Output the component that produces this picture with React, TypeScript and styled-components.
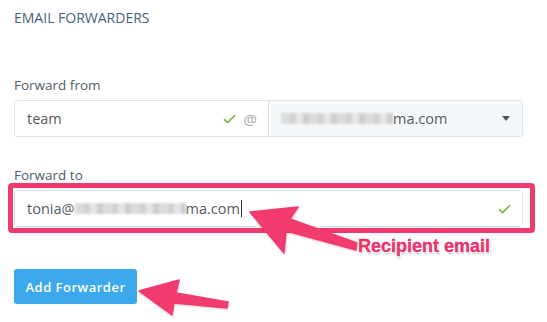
import styled, { createGlobalStyle } from "styled-components";

const GlobalStyle = createGlobalStyle`
  html, body {
    margin: 0;
    padding: 0;
    background: #ffffff;
  }
  body {
    font-family: "Open Sans", "Liberation Sans", sans-serif;
  }
`;

const Stage = styled.div`
  position: relative;
  width: 547px;
  height: 322px;
  overflow: hidden;
`;

const Form = styled.div`
  padding: 9px 24px 0 14px;
  display: flex;
  flex-direction: column;
`;

const Title = styled.h2`
  margin: 0;
  font-size: 14px;
  line-height: 18px;
  font-weight: 400;
  color: #46607a;
  text-transform: uppercase;
`;

const Label = styled.label<{ $top: number }>`
  margin-top: ${p => p.$top}px;
  margin-bottom: 6px;
  font-size: 13.5px;
  line-height: 18px;
  color: #4f5d68;
`;

const Row = styled.div`
  display: flex;
  height: 37px;
  border: 1px solid #dde3e7;
  border-radius: 3px;
  box-sizing: border-box;
`;

const Field = styled.div<{ $grey?: boolean }>`
  flex: 1;
  display: flex;
  align-items: center;
  padding: 0 11px 0 12px;
  background: ${p => (p.$grey ? "#f5f8fa" : "#ffffff")};
  font-size: 14.5px;
  color: #555c62;
  & + & {
    border-left: 1px solid #dde3e7;
  }
`;

const Value = styled.span`
  flex: 1;
  display: flex;
  align-items: center;
  white-space: nowrap;
`;

const Blur = styled.span<{ $w: number }>`
  display: inline-block;
  width: ${p => p.$w}px;
  height: 11px;
  background: repeating-linear-gradient(
    90deg,
    #dcdcdc 0 9px,
    #d2d2d2 9px 15px,
    #e6e6e6 15px 22px,
    #cdcdcd 22px 28px
  );
  filter: blur(0.8px);
`;

const Caret = styled.span`
  display: inline-block;
  width: 1px;
  height: 17px;
  background: #333;
  margin-left: 1px;
`;

const At = styled.span`
  font-size: 15px;
  color: #a3a8ad;
  margin-left: 8px;
`;

const DropArrow = styled.span`
  width: 0;
  height: 0;
  border-left: 4.5px solid transparent;
  border-right: 4.5px solid transparent;
  border-top: 5px solid #4d5358;
  margin-right: 1px;
`;

const Highlight = styled.div`
  position: relative;
`;

const HighlightRing = styled.div`
  position: absolute;
  left: -6px;
  right: -12px;
  top: -7px;
  bottom: -6px;
  border: 5.5px solid #ef3a6c;
  border-radius: 4px;
  pointer-events: none;
`;

const Button = styled.button`
  margin-top: 42px;
  align-self: flex-start;
  width: 123px;
  height: 35px;
  border: none;
  border-radius: 3px;
  background: #3ca9ec;
  color: #ffffff;
  font-family: "Open Sans", "Liberation Sans", sans-serif;
  font-size: 13px;
  font-weight: 600;
  letter-spacing: 0.5px;
  padding: 0;
`;

const Marks = styled.svg`
  position: absolute;
  left: 0;
  top: 0;
  pointer-events: none;
`;

const Callout = styled.div`
  position: absolute;
  left: 358px;
  top: 236px;
  font-family: "Liberation Sans", Arial, sans-serif;
  font-weight: 700;
  font-size: 18px;
  color: #e9336c;
  -webkit-text-stroke: 0.4px #e9336c;
  text-shadow: 0 0 2px #fff, 1px 1px 0 #fff, -1px -1px 0 #fff, 1px -1px 0 #fff,
    -1px 1px 0 #fff, 1px 2px 2px rgba(0, 0, 0, 0.25);
  white-space: nowrap;
`;

const Check = () => (
  <svg width="13" height="10" viewBox="0 0 13 10">
    <path d="M1 5.2 L4.6 8.6 L12 1.2" fill="none" stroke="#7cb342" strokeWidth="1.6" />
  </svg>
);

export default function App() {
  return (
    <>
      <GlobalStyle />
      <Stage>
        <Form>
          <Title>Email Forwarders</Title>

          <Label $top={49}>Forward from</Label>
          <Row>
            <Field>
              <Value>team</Value>
              <Check />
              <At>@</At>
            </Field>
            <Field $grey>
              <Value>
                <Blur $w={112} />
                ma.com
              </Value>
              <DropArrow />
            </Field>
          </Row>

          <Label $top={29}>Forward to</Label>
          <Highlight>
            <Row>
              <Field>
                <Value>
                  tonia@
                  <Blur $w={111} />
                  ma.com
                  <Caret />
                </Value>
                <Check />
              </Field>
            </Row>
            <HighlightRing />
          </Highlight>

          <Button>Add Forwarder</Button>
        </Form>

        <Marks width="547" height="322" viewBox="0 0 547 322">
          <defs>
            <filter id="sh" x="-10%" y="-10%" width="130%" height="130%">
              <feDropShadow dx="0.5" dy="1" stdDeviation="1" floodColor="#000" floodOpacity="0.2" />
            </filter>
          </defs>
          <path
            d="M250 212 L298 207 L290 219 L357 243 L356 250 L286 231 L284 253 Z"
            fill="#f23a6e"
            stroke="#f23a6e"
            strokeWidth="1.5"
            strokeLinejoin="round"
            filter="url(#sh)"
          />
          <path
            d="M139 291 L179 280 L176 293 L228 302 L227 308 L174 303 L172 315 Z"
            fill="#f23a6e"
            stroke="#f23a6e"
            strokeWidth="1.5"
            strokeLinejoin="round"
            filter="url(#sh)"
          />
        </Marks>
        <Callout>Recipient email</Callout>
      </Stage>
    </>
  );
}
